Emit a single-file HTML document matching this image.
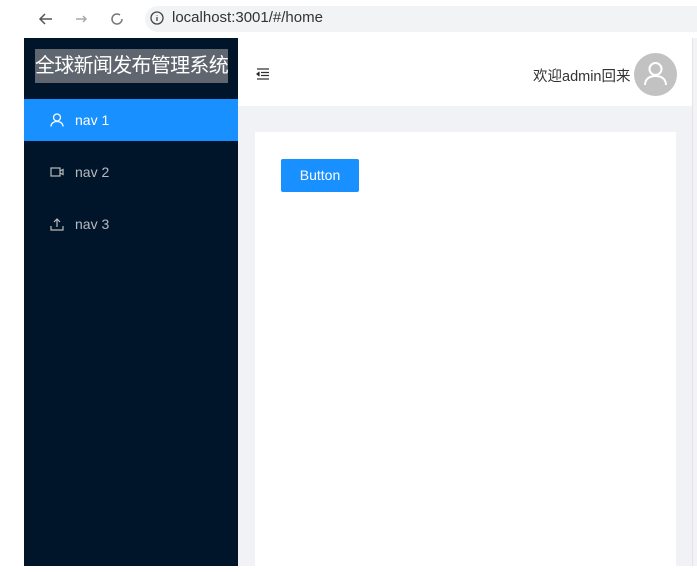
<!DOCTYPE html>
<html><head><meta charset="utf-8"><style>
*{margin:0;padding:0;box-sizing:border-box}
body{width:697px;height:566px;overflow:hidden;background:#fff;font-family:"Liberation Sans","Noto Sans CJK SC",sans-serif;position:relative}
.bar{position:absolute;left:0;top:0;width:697px;height:38px;background:#fff}
.url{position:absolute;left:145px;top:6px;width:552px;height:26px;background:#f1f3f4;border-radius:13px 0 0 13px}
.side{position:absolute;left:24px;top:38px;width:214px;height:528px;background:#001529}
.title{position:absolute;left:11px;top:11px;width:193px;height:34px;background:#5f6670;color:#fff;font-size:20px;line-height:34px;white-space:nowrap;letter-spacing:-0.7px;overflow:hidden}
.item{position:absolute;left:0;width:214px;height:42px;color:rgba(255,255,255,.7);font-size:14px;line-height:42px;padding-left:26px}
.item svg{position:absolute;left:26px;top:14px}
.item span{margin-left:25px}
.sel{background:#1890ff;color:#fff}
.hdr{position:absolute;left:238px;top:38px;width:454px;height:68px;background:#fff}
.cont{position:absolute;left:238px;top:106px;width:454px;height:460px;background:#f0f2f5}
.card{position:absolute;left:17px;top:26px;width:421px;height:440px;background:#fff}
.btn{position:absolute;left:26px;top:27px;width:78px;height:33px;background:#1890ff;color:#fff;font-size:14px;line-height:33px;text-align:center;border-radius:2px}
.edge{position:absolute;left:692px;top:38px;width:5px;height:528px;background:#f3f3f5;border-left:1px solid #e4e4e8}
</style></head><body>
<div class="bar">
<svg style="position:absolute;left:38px;top:10px" width="110" height="18" fill="none" stroke="#555" stroke-width="1.5"><path d="M14 9H2M7 4L2 9l5 5"/><path d="M38 9h10M45 6l3 3-3 3" stroke="#aaa"/><path d="M82 5a5 5 0 1 0 2 4" stroke="#777"/></svg>
<div class="url"></div>
<svg style="position:absolute;left:150px;top:11px" width="14" height="14" fill="none" stroke="#444" stroke-width="1.3"><circle cx="7" cy="7" r="6"/><path d="M7 6v4M7 4v.5"/></svg>
<div style="position:absolute;left:172px;top:9px;font-size:15px;color:#333">localhost:3001/#/home</div>
</div>
<div class="side">
<div class="title">全球新闻发布管理系统</div>
<div class="item sel" style="top:61px"><svg width="14" height="14" fill="none" stroke="#fff" stroke-width="1.3"><circle cx="7" cy="4.5" r="3.5"/><path d="M1 13.5c0-3 2.5-5 6-5s6 2 6 5"/></svg><span>nav 1</span></div>
<div class="item" style="top:113px"><svg width="14" height="14" fill="none" stroke="#bbb" stroke-width="1.2"><rect x="1" y="3" width="9" height="8"/><path d="M10 6l3-1.5v5L10 8"/></svg><span>nav 2</span></div>
<div class="item" style="top:165px"><svg width="14" height="14" fill="none" stroke="#bbb" stroke-width="1.2"><path d="M7 10V2M4 5l3-3 3 3M1 9v4h12V9"/></svg><span>nav 3</span></div>
</div>
<div class="hdr">
<svg style="position:absolute;left:18px;top:30px" width="14" height="12" stroke="#333" stroke-width="1.3"><path d="M1 1h12M5 4.5h8M5 7.5h8M1 11h12M3.5 4L1 6l2.5 2"/></svg>
<div style="position:absolute;left:295px;top:27px;font-size:14.5px;color:#333">欢迎admin回来</div>
<div style="position:absolute;left:396px;top:15px;width:43px;height:43px;border-radius:50%;background:#c2c2c2"><svg width="43" height="43" fill="none" stroke="#fff" stroke-width="2"><circle cx="21.5" cy="16" r="6"/><path d="M11 32c0-6 4.5-9 10.5-9S32 26 32 32"/></svg></div>
</div>
<div class="cont"><div class="card"><div class="btn">Button</div></div></div>
<div class="edge"></div>
</body></html>
